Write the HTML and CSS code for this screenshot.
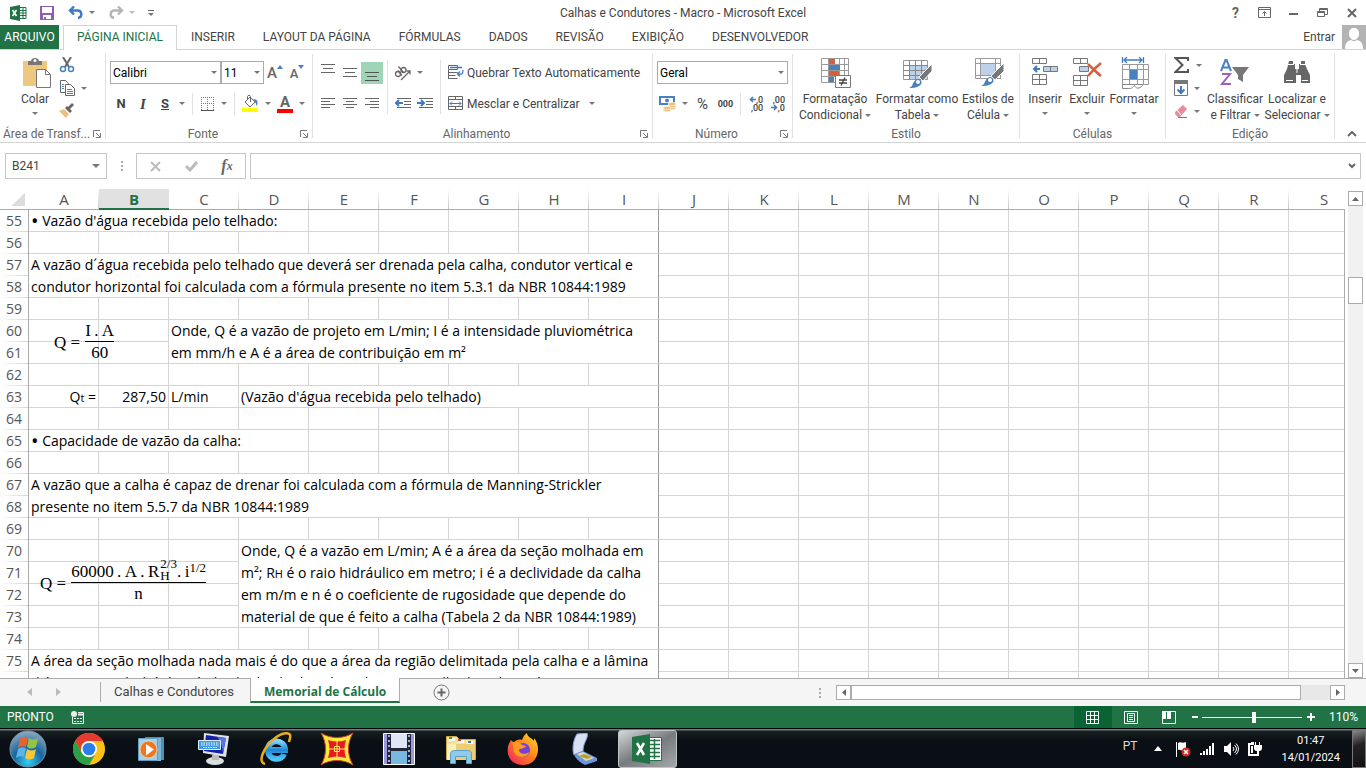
FILE: index.html
```html
<!DOCTYPE html>
<html lang="pt-BR">
<head>
    <meta charset="UTF-8">
    <meta name="viewport" content="width=device-width, initial-scale=1.0">
    <title>Calhas e Condutores - Macro - Microsoft Excel</title>
    <link rel="stylesheet" href="styles.css">
</head>
<body>
    <header class="titlebar">
        <div class="quick">
            <svg class="quick-logo" width="17" height="16" viewBox="0 0 17 16"><path fill="#217346" d="M0 2l10-2v16L0 14z"/><path fill="none" stroke="#217346" d="M10 2.5h6v11h-6M10 5.500h6M10 8h6M10 10.500h6M13 3v10"/><path stroke="#fff" stroke-width="1.600" d="M2.500 5l4 6M6.500 5l-4 6"/></svg>
            <button class="quick-save" aria-label="Salvar"><svg width="14" height="14" viewBox="0 0 14 14"><path fill="#8a5fb5" fill-rule="evenodd" d="M0 0h14v14H0zM2 1v6h10V1zM3 9v4h8V9z"/><path fill="#8a5fb5" d="M4 11h2v2H4z"/></svg></button>
            <button class="quick-undo" aria-label="Desfazer"><svg width="16" height="14" viewBox="0 0 16 14"><path fill="none" stroke="#3f7ac0" stroke-width="2.400" d="M2 4.500h7.500c5 0 5 7 .5 7.500M6 .500l-4 4 4 4"/></svg></button>
            <span class="arrow"></span>
            <button class="quick-redo" aria-label="Refazer"><svg width="16" height="14" viewBox="0 0 16 14"><path fill="none" stroke="#b5b5b5" stroke-width="2.400" d="M14 4.500H6.500c-5 0-5 7-.5 7.500M10 .500l4 4-4 4"/></svg></button>
            <span class="arrow arrow-pale"></span>
            <button class="quick-more" aria-label="Personalizar"><i></i><span class="arrow"></span></button>
        </div>
        <h1>Calhas e Condutores - Macro - Microsoft Excel</h1>
        <div class="window-buttons">
            <button aria-label="Ajuda"><b>?</b></button>
            <button aria-label="Opções da faixa"><svg width="13" height="11" viewBox="0 0 13 11"><path fill="none" stroke="#666" d="M.5.5h12v10H.5zM.5 2.500h12M6.500 9V4.500M4.500 6.500l2-2 2 2"/></svg></button>
            <button aria-label="Minimizar"><svg width="10" height="10"><path fill="#666" d="M0 5h9v2H0z"/></svg></button>
            <button aria-label="Restaurar"><svg width="11" height="10" viewBox="0 0 11 10"><path fill="none" stroke="#666" d="M2.500 3V.500h8v6H8M.5 3.500h7v5h-7zM2.500 1.500h8M.5 4.500h7"/></svg></button>
            <button aria-label="Fechar"><svg width="10" height="10" viewBox="0 0 10 10"><path stroke="#666" stroke-width="2" d="M1 1l8 8M9 1L1 9"/></svg></button>
        </div>
    </header>

    <nav class="tabs">
        <a href="#" class="file">ARQUIVO</a>
        <a href="#" class="active">PÁGINA INICIAL</a>
        <a href="#">INSERIR</a>
        <a href="#">LAYOUT DA PÁGINA</a>
        <a href="#">FÓRMULAS</a>
        <a href="#">DADOS</a>
        <a href="#">REVISÃO</a>
        <a href="#">EXIBIÇÃO</a>
        <a href="#">DESENVOLVEDOR</a>
        <div class="account">
            <a href="#">Entrar</a>
            <svg width="24" height="24" viewBox="0 0 24 24"><path fill="#b3b3b3" d="M0 0h24v24H0z"/><path fill="#fff" d="M12 3c3 0 5 2 5 5.500S15 15 12 15s-5-3-5-6.500S9 3 12 3zM3 24c0-6 2-8 6-9 2 1.500 4 1.500 6 0 4 1 6 3 6 9z"/></svg>
        </div>
    </nav>

    <section class="ribbon">
        <div class="group clipboard">
            <div class="body">
                <button class="big">
                    <svg width="32" height="32" viewBox="0 0 32 32"><path fill="#edc87e" d="M4 4h24v25H4z"/><path fill="#777" d="M9 4h3c0-4 8-4 8 0h3v4H9z"/><circle cx="16" cy="3.500" r="1.500" fill="#fff"/><path fill="#fff" stroke="#777" d="M17.500 12.500h9l5 5v13h-14z"/><path fill="none" stroke="#777" d="M26.500 12.500v5h5"/></svg>
                    <span>Colar</span><i class="arrow"></i>
                </button>
                <div class="stack">
                    <button aria-label="Recortar"><svg width="16" height="16" viewBox="0 0 16 16"><path stroke="#666" stroke-width="2" d="M4 0l6 10M12 0L6 10"/><g fill="none" stroke="#4a80bd" stroke-width="1.500"><circle cx="4" cy="12" r="2.500"/><circle cx="12" cy="12" r="2.500"/></g></svg></button>
                    <button aria-label="Copiar"><svg width="16" height="16" viewBox="0 0 16 16"><path fill="#fff" stroke="#666" d="M1.500.5h5l3 3v9h-8z"/><path fill="#fff" stroke="#666" d="M6.500 4.500h5l4 4v7h-9z"/><path stroke="#4a80bd" d="M3 4.500h2M3 6.500h2M3 8.500h2M8 9.500h5M8 11.500h6M8 13.500h6"/></svg><i class="arrow"></i></button>
                    <button aria-label="Pincel de formatação"><svg width="16" height="16" viewBox="0 0 16 16"><path fill="#edc07e" d="M0 8l5-2 5 5-3 4z"/><path fill="#666" d="M6 5l5 5 2-2-2-2 4-4-2-2-4 4-1-1z"/></svg></button>
                </div>
            </div>
            <div class="label">Área de Transf...</div><svg class="launch" width="8" height="8"><use href="#launcher"/></svg>
        </div>

        <div class="group font">
            <div class="body rows">
                <div class="row">
                    <label class="combo combo-font"><select aria-label="Fonte"><option>Calibri</option></select></label>
                    <label class="combo combo-size"><select aria-label="Tamanho"><option>11</option></select></label>
                    <button class="tool grow" aria-label="Aumentar">A<svg width="6" height="4"><path fill="#4a80bd" d="M3 0l3 4H0z"/></svg></button>
                    <button class="tool shrink" aria-label="Diminuir">A<svg width="6" height="4"><path fill="#4a80bd" d="M0 0h6L3 4z"/></svg></button>
                </div>
                <div class="row">
                    <button class="tool"><b>N</b></button>
                    <button class="tool italic"><b><i>I</i></b></button>
                    <button class="tool"><b><u>S</u></b></button>
                    <button class="drop" aria-label="Sublinhado"><i class="arrow"></i></button>
                    <span class="sep"></span>
                    <button class="tool" aria-label="Bordas"><svg width="13" height="14"><path stroke="#777" stroke-dasharray="1 1" d="M0 .5h13M.5 0v13M6.500 0v13M12.500 0v13M0 6.500h13"/><path stroke="#555" d="M0 13.500h13"/></svg></button>
                    <button class="drop" aria-label="Mais bordas"><i class="arrow"></i></button>
                    <span class="sep"></span>
                    <button class="tool fill-color" aria-label="Cor de preenchimento"><svg width="17" height="17" viewBox="0 0 17 17"><path fill="#fff" stroke="#666" d="M3 7l5-5 5 5-5 5z"/><path fill="none" stroke="#666" d="M5.500 4V1.500c0-1.500 3-1.500 3 0V7"/><path fill="#4a80bd" d="M11 4c5 0 5 3 4 7-1-1-1-4-4-7z"/><path fill="#ff0" d="M0 13h16v4H0z"/></svg></button>
                    <button class="drop" aria-label="Mais cores"><i class="arrow"></i></button>
                    <button class="tool font-color">A</button>
                    <button class="drop" aria-label="Mais cores da fonte"><i class="arrow"></i></button>
                </div>
            </div>
            <div class="label">Fonte</div><svg class="launch" width="8" height="8"><use href="#launcher"/></svg>
        </div>

        <div class="group align">
            <div class="body">
                <div class="rows">
                    <div class="row">
                        <button class="tool" aria-label="Em cima"><svg width="14" height="17"><path stroke="#666" d="M0 .5h14M2 4.500h10M0 8.500h14"/></svg></button>
                        <button class="tool" aria-label="No meio"><svg width="14" height="17"><path stroke="#666" d="M0 4.500h14M2 8.500h10M0 12.500h14"/></svg></button>
                        <button class="tool on" aria-label="Embaixo"><svg width="14" height="17"><path stroke="#555" d="M0 8.500h14M2 12.500h10M0 16.500h14"/></svg></button>
                    </div>
                    <div class="row">
                        <button class="tool" aria-label="Esquerda"><svg width="14" height="11"><path stroke="#666" d="M0 .5h14M0 3.500h9M0 6.500h14M0 9.500h9"/></svg></button>
                        <button class="tool" aria-label="Centro"><svg width="14" height="11"><path stroke="#666" d="M0 .5h14M3 3.500h8M0 6.500h14M3 9.500h8"/></svg></button>
                        <button class="tool" aria-label="Direita"><svg width="14" height="11"><path stroke="#666" d="M0 .5h14M5 3.500h9M0 6.500h14M5 9.500h9"/></svg></button>
                    </div>
                </div>
                <span class="sep tall"></span>
                <div class="rows">
                    <div class="row">
                        <button class="tool" aria-label="Orientação"><svg width="18" height="16" viewBox="0 0 18 16"><g fill="none" stroke="#666" stroke-width="1.300"><circle cx="4" cy="9" r="2.500"/><path d="M4 5.500l4 5"/><circle cx="9.500" cy="5" r="2.500"/><path d="M4.500 1.500l5 6"/><path d="M7 15l9-9M12.500 6H16v3.500"/></g></svg></button>
                        <button class="drop" aria-label="Mais orientações"><i class="arrow"></i></button>
                    </div>
                    <div class="row">
                        <button class="tool" aria-label="Diminuir recuo"><svg width="16" height="11"><path stroke="#666" d="M2 .5h14M9 3.500h7M9 6.500h7M2 9.500h14"/><path fill="none" stroke="#3f7ac0" stroke-width="2" d="M8 5H1M4 2L1 5l3 3"/></svg></button>
                        <button class="tool" aria-label="Aumentar recuo"><svg width="16" height="11"><path stroke="#666" d="M2 .5h14M9 3.500h7M9 6.500h7M2 9.500h14"/><path fill="none" stroke="#3f7ac0" stroke-width="2" d="M0 5h7M4 2l3 3-3 3"/></svg></button>
                    </div>
                </div>
                <span class="sep tall"></span>
                <div class="rows">
                    <div class="row"><button class="wide"><svg width="16" height="15"><path fill="none" stroke="#666" d="M.5.5h9v4h-9zM.5 7.500h9M.5 10.500h7M.5 13.500h9M.5 5v9"/><path fill="none" stroke="#3f7ac0" stroke-width="1.300" d="M2 2.500h12M15 5c0 5-2 4-5 4M12 6.500L9.500 9l2.500 2.500"/></svg>Quebrar Texto Automaticamente</button></div>
                    <div class="row"><button class="wide"><svg width="16" height="15"><path fill="none" stroke="#666" d="M.5.5h14v13H.5zM.5 3.500h14M.5 10.500h14M7.500.5v3M7.500 10.500v3"/><path fill="none" stroke="#3f7ac0" d="M2 7.500h11M4 5.500l-2 2 2 2M11 5.500l2 2-2 2"/></svg>Mesclar e Centralizar<i class="arrow"></i></button></div>
                </div>
            </div>
            <div class="label">Alinhamento</div><svg class="launch" width="8" height="8"><use href="#launcher"/></svg>
        </div>

        <div class="group number">
            <div class="body rows">
                <div class="row"><label class="combo combo-number"><select aria-label="Formato de número"><option>Geral</option></select></label></div>
                <div class="row">
                    <button class="tool" aria-label="Moeda"><svg width="18" height="16" viewBox="0 0 18 16"><path fill="none" stroke="#4a80bd" stroke-width="2" d="M1 1h14v7H1z"/><circle cx="8" cy="4.500" r="2" fill="#4a80bd"/><g fill="#edc07e" stroke="#fff" stroke-width=".6"><ellipse cx="13" cy="12" rx="4" ry="1.700"/><ellipse cx="13" cy="10" rx="4" ry="1.700"/><ellipse cx="13" cy="8" rx="4" ry="1.700"/><ellipse cx="8" cy="14" rx="4" ry="1.700"/><ellipse cx="8" cy="12" rx="4" ry="1.700"/></g></svg></button>
                    <button class="drop" aria-label="Mais moedas"><i class="arrow"></i></button>
                    <button class="tool percent">%</button>
                    <button class="tool thousands">000</button>
                    <span class="sep"></span>
                    <button class="tool decimals" aria-label="Aumentar casas"><span><svg width="7" height="7"><path fill="none" stroke="#3f7ac0" stroke-width="1.500" d="M7 3.500H1M4 1L1.500 3.500 4 6"/></svg>,0</span><span>,00</span></button>
                    <button class="tool decimals" aria-label="Diminuir casas"><span>,00</span><span><svg width="7" height="7"><path fill="none" stroke="#3f7ac0" stroke-width="1.500" d="M0 3.500h6M3 1l2.500 2.500L3 6"/></svg>,0</span></button>
                </div>
            </div>
            <div class="label">Número</div><svg class="launch" width="8" height="8"><use href="#launcher"/></svg>
        </div>

        <div class="group style">
            <div class="body">
                <button class="big">
                    <svg width="32" height="32" viewBox="0 0 32 32"><path fill="#fff" stroke="#999" d="M2.500 1.500h27v24h-27zM2.500 7.500h27M2.500 13.500h27M2.500 19.500h27M9.500 1.500v24M20.500 1.500v24M25.500 1.500v24"/><path fill="#d65f3e" d="M10 2h6v5h-6zM10 14h10v5H10z"/><path fill="#4a80bd" d="M10 8h11v5H10zM10 20h5v5h-5z"/><path fill="#fff" stroke="#777" d="M16.500 18.500h15v12h-15z"/><path stroke="#444" stroke-width="1.300" d="M20 23h8M20 26h8M26 20.500l-4 8"/></svg>
                    <span>Formatação<br>Condicional <i class="arrow"></i></span>
                </button>
                <button class="big">
                    <svg width="32" height="32" viewBox="0 0 32 32"><path fill="#fff" stroke="#999" d="M2.500 3.500h24v19h-24z"/><path fill="#bdd2ea" d="M9 9h17v13H9z"/><path stroke="#888" d="M2 8.500h25M2 13.500h25M2 18.500h25M8.500 3v20M14.500 3v20M20.500 3v20"/><path fill="#777" stroke="#fff" d="M31 7v7l-9 10-4-4z"/><path fill="#4a80bd" d="M8 31c5-1 3-8 9-9 4 0 5 5 1 7-3 2-7 2-10 2z"/><circle cx="17" cy="25" r="2" fill="#fff"/></svg>
                    <span>Formatar como<br>Tabela <i class="arrow"></i></span>
                </button>
                <button class="big style-cell">
                    <svg width="32" height="32" viewBox="0 0 32 32"><path fill="#fff" stroke="#999" d="M3.500 1.500h25v20h-25zM3 6.500h26M8.500 1v21M23.500 1v21M3 18.500h26"/><path fill="#bdd2ea" d="M9 7h14v11H9z"/><path fill="#777" stroke="#fff" d="M32 6v8l-9 9-4-4z"/><path fill="#4a80bd" d="M9 29c5-1 3-8 9-9 4 0 5 5 1 7-3 2-7 2-10 2z"/><circle cx="18" cy="23" r="2" fill="#fff"/></svg>
                    <span>Estilos de<br>Célula <i class="arrow"></i></span>
                </button>
            </div>
            <div class="label">Estilo</div>
        </div>

        <div class="group cells">
            <div class="body">
                <button class="big">
                    <svg width="32" height="32" viewBox="0 0 32 32"><path fill="#fff" stroke="#777" d="M3.500 1.500h14v5h-14zM10.500 1.500v5M3.500 17.500h14v10h-14zM10.500 17.500v10M3.500 22.500h14"/><path fill="#bdd2ea" stroke="#777" d="M14.500 9.500h14v5h-14zM21.500 9.500v5"/><path fill="none" stroke="#3f7ac0" stroke-width="2" d="M11 12H5M8 9l-3 3 3 3"/></svg>
                    <span>Inserir</span><i class="arrow"></i>
                </button>
                <button class="big">
                    <svg width="32" height="32" viewBox="0 0 32 32"><path fill="#fff" stroke="#777" d="M2.500 1.500h14v5h-14zM9.500 1.500v5M2.500 18.500h14v10h-14zM9.500 18.500v10M2.500 23.500h14"/><path fill="#bdd2ea" stroke="#777" d="M8.500 9.500h9v5h-9z"/><path fill="none" stroke="#d65f3e" stroke-width="2.500" d="M17 7c4 4 8 8 13 12M30 6c-5 4-9 8-13 13"/></svg>
                    <span>Excluir</span><i class="arrow"></i>
                </button>
                <button class="big">
                    <svg width="32" height="32" viewBox="0 0 32 32"><path fill="none" stroke="#3f7ac0" stroke-width="1.300" d="M4.500 0v6M25.500 0v6M6 3h18M9 0L6 3l3 3M21 0l3 3-3 3"/><path fill="#fff" stroke="#999" d="M4.500 7.500h26v20h-26zM4 12.500h27M4 22.500h27M11.500 7v20M19.500 7v20M25.500 7v20"/><path fill="#4a80bd" d="M12 13h7v9h-7z"/><path fill="#fff" stroke="#888" d="M4.500 27.500h20v1c-3 4-7 3-8 0-2 3-4 3-5 3h-7z"/></svg>
                    <span>Formatar</span><i class="arrow"></i>
                </button>
            </div>
            <div class="label">Células</div>
        </div>

        <div class="group edit">
            <div class="body">
                <div class="stack">
                    <button aria-label="Soma"><svg width="16" height="16" viewBox="0 0 16 16"><path fill="none" stroke="#555" stroke-width="2" d="M14 4V1H1.500l7 7-7 7H14v-3"/></svg><i class="arrow"></i></button>
                    <button aria-label="Preencher"><svg width="14" height="16" viewBox="0 0 14 16"><path fill="none" stroke="#777" d="M.5.5h13v15H.5z"/><path fill="#777" d="M0 0h14v4H0z"/><path fill="none" stroke="#3f7ac0" stroke-width="2" d="M7 6v7M3.500 9.500L7 13l3.500-3.500"/></svg><i class="arrow"></i></button>
                    <button aria-label="Limpar"><svg width="14" height="14" viewBox="0 0 14 14"><path fill="#ea8a9b" d="M1 8l8-7 4 4-7 8H4L1 10z"/><path stroke="#777" d="M4 13.500h9"/><path stroke="#fff" d="M3 6l4 5"/></svg><i class="arrow"></i></button>
                </div>
                <button class="big">
                    <svg width="32" height="32" viewBox="0 0 32 32"><path fill="none" stroke="#4a80bd" stroke-width="2" d="M2 14L6.500 3h1L12 14M4 10.500h6"/><path fill="none" stroke="#9b62b8" stroke-width="2" d="M3 17h8L3 27h9"/><path fill="#777" d="M13 10h17l-6 8v7l-5-3v-4z"/></svg>
                    <span>Classificar<br>e Filtrar <i class="arrow"></i></span>
                </button>
                <button class="big">
                    <svg width="32" height="32" viewBox="0 0 32 32"><path fill="#666" d="M8 4h4v3h2v5h4V7h2V4h4v3l2 5 3 6v8h-9v-8h-5v8H3v-8l3-6z"/><path stroke="#fff" d="M5 23.500h7M21 23.500h6M7 7.500h6M19 7.500h6M16 12v4"/></svg>
                    <span>Localizar e<br>Selecionar <i class="arrow"></i></span>
                </button>
            </div>
            <div class="label">Edição</div>
        </div>
        <button class="collapse" aria-label="Recolher"><svg width="10" height="6"><path fill="none" stroke="#666" stroke-width="2" d="M1 5l4-4 4 4"/></svg></button>
    </section>

    <svg class="symbols" width="0" height="0"><symbol id="launcher" viewBox="0 0 8 8"><path fill="none" stroke="#777" d="M.5 7V.500H7M7.500 3v4.500H3M3 3l4 4"/></symbol></svg>

    <section class="formula-bar">
        <div class="name-box"><input type="text" value="B241" aria-label="Caixa de nome"><i class="arrow"></i></div>
        <span class="dots"></span>
        <div class="formula-buttons">
            <button aria-label="Cancelar"><svg width="11" height="11"><path stroke="#bbb" stroke-width="2" d="M1 1l9 9M10 1l-9 9"/></svg></button>
            <button aria-label="Inserir"><svg width="13" height="11"><path fill="none" stroke="#bbb" stroke-width="3" d="M1 5l4 4 7-8"/></svg></button>
            <button class="fx">f<small>x</small></button>
        </div>
        <div class="formula-box"><input type="text" aria-label="Barra de fórmulas"><svg width="8" height="6"><path fill="none" stroke="#666" stroke-width="2" d="M1 1l3 3 3-3"/></svg></div>
    </section>

    <main class="sheet">
        <div class="grid"><table id="cells"></table></div>
        <div class="vscroll">
            <button aria-label="Para cima"><svg width="7" height="4"><path fill="#666" d="M3.500 0L7 4H0z"/></svg></button>
            <div class="track"><div class="thumb"></div></div>
            <button aria-label="Para baixo"><svg width="7" height="4"><path fill="#666" d="M0 0h7L3.500 4z"/></svg></button>
        </div>
    </main>

    <section class="sheet-tabs">
        <div class="sheet-nav">
            <svg width="5" height="8"><path fill="#bbb" d="M5 0v8L0 4z"/></svg>
            <svg width="5" height="8"><path fill="#bbb" d="M0 0l5 4-5 4z"/></svg>
        </div>
        <a href="#">Calhas e Condutores</a>
        <a href="#" class="active">Memorial de Cálculo</a>
        <button class="add" aria-label="Nova planilha"><svg width="17" height="17"><circle cx="8.500" cy="8.500" r="7.500" fill="none" stroke="#777"/><path stroke="#666" stroke-width="2" d="M4.500 8.500h8M8.500 4.500v8"/></svg></button>
        <div class="hscroll">
            <span class="dots"></span>
            <button aria-label="Para a esquerda"><svg width="4" height="7"><path fill="#666" d="M4 0v7L0 3.500z"/></svg></button>
            <div class="track"><div class="thumb"></div></div>
            <button aria-label="Para a direita"><svg width="4" height="7"><path fill="#666" d="M0 0l4 3.500L0 7z"/></svg></button>
        </div>
    </section>

    <footer class="status">
        <span>PRONTO</span>
        <svg width="13" height="13" viewBox="0 0 13 13"><path fill="none" stroke="#e8f1ec" d="M1.500 6v6.500h11v-11H7"/><circle cx="3" cy="3" r="3" fill="#e8f1ec"/><path stroke="#e8f1ec" stroke-dasharray="2 1" d="M3 7.500h8M3 10.500h8"/><path stroke="#e8f1ec" stroke-width="2" d="M7 3.500h6"/></svg>
        <div class="views">
            <button class="on" aria-label="Normal"><svg width="13" height="13"><path fill="none" stroke="#fff" d="M.5.5h12v12H.5zM.5 4.500h12M.5 8.500h12M4.500.5v12M8.500.5v12"/></svg></button>
            <button aria-label="Layout"><svg width="14" height="13"><path fill="none" stroke="#fff" d="M.5.5h13v12H.5zM3.500 2.500h7v8h-7zM5 4.500h4M5 6.500h4M5 8.500h4"/></svg></button>
            <button aria-label="Quebra de página"><svg width="14" height="13"><path fill="none" stroke="#fff" d="M.5.5h13v12H.5z"/><path fill="#fff" d="M0 0h4v8H0zM5 0h4v8H5z"/></svg></button>
        </div>
        <button class="zoom" aria-label="Menos zoom"><svg width="6" height="10"><path fill="#fff" d="M0 4h6v2H0z"/></svg></button>
        <input type="range" min="0" max="100" value="52" aria-label="Zoom">
        <button class="zoom" aria-label="Mais zoom"><svg width="8" height="8"><path fill="#fff" d="M0 3h3V0h2v3h3v2H5v3H3V5H0z"/></svg></button>
        <span class="percent-zoom">110%</span>
    </footer>

    <footer class="taskbar">
        <button class="start" aria-label="Iniciar">
            <svg width="40" height="38" viewBox="0 0 40 38"><defs><radialGradient id="orb" cx=".5" cy=".85" r=".9"><stop offset="0" stop-color="#35d0f5"/><stop offset=".45" stop-color="#1764a0"/><stop offset="1" stop-color="#9fb4c0"/></radialGradient></defs><circle cx="20" cy="19" r="18" fill="url(#orb)" stroke="#6e98ac"/><path fill="#e8622b" d="M12 9c3-2 5-2 8-1l-2 9c-3-1-5-1-8 1z"/><path fill="#8fc745" d="M21 8c3 2 6 2 9 0l-2 9c-3 2-6 2-9 0z"/><path fill="#5bb3ea" d="M10 19c3-2 5-2 8-1l-2 9c-3-1-5-1-8 1z"/><path fill="#fbc738" d="M19 19c3 2 6 2 9 0l-2 9c-3 2-6 2-9 0z"/></svg>
        </button>
        <button aria-label="Chrome"><svg width="32" height="32" viewBox="0 0 32 32"><circle cx="16" cy="16" r="16" fill="#fbc116"/><path fill="#e33b2e" d="M2.100 8A16 16 0 0 1 29.900 8H16a8 8 0 0 0-7 12z"/><path fill="#2c9f4b" d="M2.100 8L9 20a8 8 0 0 0 14 0l-7 12A16 16 0 0 1 2.100 8z"/><circle cx="16" cy="16" r="8" fill="#fff"/><circle cx="16" cy="16" r="6.300" fill="#2b7de9"/></svg></button>
        <button aria-label="Media Player"><svg width="32" height="32" viewBox="0 0 32 32"><path fill="#4e8fb8" d="M10 4h19v23H10z"/><path fill="#79b6d8" d="M8 5h18v23H8z"/><path fill="#a2d2e8" stroke="#609dbe" d="M3.500 5.500h19v22h-19z"/><circle cx="13.500" cy="16.500" r="8.500" fill="#f0761e" stroke="#fbcaa0"/><path fill="#fff" d="M11 11l8 5.500-8 6z"/></svg></button>
        <button aria-label="Teclado"><svg width="32" height="32" viewBox="0 0 32 32"><path fill="#dfe3e6" d="M7 0l25 3-3 21-23-4z"/><path fill="#1420a8" d="M9 2l20 3-3 16-19-3z"/><path fill="#5a73e5" d="M20 4l9 1-3 15c-1-7-2-12-6-16z"/><ellipse cx="18" cy="28" rx="9" ry="4" fill="#dadfe2"/><path fill="#bbb" d="M15 22h7v5h-7z"/><path fill="#3f9bdf" stroke="#d8efff" d="M1.500 7.500h22v9h-22z"/><path stroke="#fff" stroke-dasharray="1.500 1" d="M4 10h18M4 12h18M6 14.500h14"/></svg></button>
        <button aria-label="Internet Explorer"><svg width="34" height="34" viewBox="0 0 34 34"><defs><linearGradient id="ie" x2="0" y2="1"><stop offset="0" stop-color="#7bd4fb"/><stop offset=".5" stop-color="#1f85d6"/><stop offset="1" stop-color="#50c2f5"/></linearGradient></defs><path fill="none" stroke="url(#ie)" stroke-width="6" d="M9 18h18c0-11-17-12-17 0 0 11 14 11 16 4"/><path fill="none" stroke="#e9ac20" stroke-width="2.500" d="M7 32c-8-2-1-17 9-25C24 0 34-1 32 6l-1 4"/></svg></button>
        <button aria-label="Aplicativo"><svg width="34" height="34" viewBox="0 0 34 34"><path fill="#ffe53a" stroke="#c43a32" d="M1 1c10 6 22 6 32 0-6 10-6 22 0 32-10-6-22-6-32 0C7 23 7 11 1 1z"/><path fill="#e61b22" d="M8 8c6 2 12 2 18 0-2 6-2 12 0 18-6-2-12-2-18 0 2-6 2-12 0-18z"/><path fill="none" stroke="#ffe95d" d="M17 7v20M7 17h20"/><path fill="none" stroke="#ffe95d" d="M14.500 14.500h5v5h-5z"/></svg></button>
        <button aria-label="Vídeo"><svg width="32" height="32" viewBox="0 0 32 32"><path fill="#9b99dc" stroke="#fff" d="M.5.500h31v31H.5z"/><path fill="#dfe7f6" d="M8 1h16v30H8z"/><path fill="#222936" d="M4 1h4v30H4zM24 1h4v30h-4zM8 15h16v3H8z"/><path fill="#79b8e0" d="M8 18h16v13H8z"/><path stroke="#aaa9e8" stroke-width="2" stroke-dasharray="2 3" d="M6 2v28M26 2v28"/></svg></button>
        <button aria-label="Explorador"><svg width="32" height="32" viewBox="0 0 32 32"><path fill="#f6e196" stroke="#d0a94e" d="M1.500 3.500h10l3 3h16v20h-29z"/><path fill="#fff" d="M4 5h6v3H4zM13 7h6v3h-6zM22 8h6v3h-6z"/><path fill="#36a83b" d="M4 4h3v2H4z"/><path fill="#d8452a" d="M13 6h3v2h-3z"/><path fill="#2878c8" d="M23 8h3v2h-3z"/><path fill="#eecd72" d="M2 11h28v16H2z"/><path fill="#fbefb9" d="M2 11h9v16H2z"/><path fill="#8fcbe9" stroke="#5a9fc6" d="M5.500 30.500V20.500c0-2 2-3 4-3h13c3 0 4 1 4 3v10h-5v-7h-11v7z"/></svg></button>
        <button aria-label="Firefox"><svg width="32" height="32" viewBox="0 0 32 32"><defs><linearGradient id="fox" x1="1" y1="0" x2="0" y2="1"><stop offset="0" stop-color="#ffe12a"/><stop offset=".5" stop-color="#ff7a1d"/><stop offset="1" stop-color="#ee1c6b"/></linearGradient></defs><path fill="url(#fox)" d="M4 7c1 1 2 2 3 2 2-2 5-3 8-2 1-3 2-5 5-7 0 4 5 5 7 8V5c8 9 4 27-11 27C1 32-3 17 4 7z"/><circle cx="16" cy="17" r="7" fill="#7542d6"/><path fill="#ff9a22" d="M5 10c4-2 8-1 10 2l4 1c-1 3-7 2-7 4 0 4 7 5 10 2-1 6-12 7-15 0-1-3 0-5-2-9z"/></svg></button>
        <button aria-label="Scanner"><svg width="32" height="32" viewBox="0 0 32 32"><path fill="#d8e0f4" stroke="#8da4d8" d="M8 1l10-1c2 5-4 9-4 18l-9 4C3 17 4 7 8 1z"/><path fill="#6f93dd" d="M5 21l9-3 14 7v3l-12 4C10 29 6 25 5 21z"/><path fill="#d5e0b8" d="M8 21l6-2 11 6-8 3z"/><path fill="#b7a030" d="M15 21l8 3-5 2-8-3z"/></svg></button>
        <button class="open" aria-label="Excel"><svg width="32" height="30" viewBox="0 0 32 30"><path fill="#fff" stroke="#217346" d="M16 3.500h13.500v23H16z"/><path fill="#217346" d="M0 3l18-3v30L0 27z"/><path stroke="#217346" stroke-width="1.500" d="M18 6.500h10M18 10.500h10M18 14.500h10M18 18.500h10M18 22.500h10M22.500 5v20"/><path stroke="#fff" stroke-width="2.500" d="M5 9l7 12M12 9L5 21"/></svg></button>
        <div class="tray">
            <span class="lang">PT</span>
            <svg class="more" width="8" height="5"><path fill="#fff" d="M4 0l4 5H0z"/></svg>
            <svg width="16" height="16" viewBox="0 0 16 16"><path fill="#fff" d="M1 1h1v15H1zM3 2c3-2 4 1 8-1v8c-4 2-5-1-8 0z"/><circle cx="11" cy="11" r="4.500" fill="#d3281f"/><path stroke="#fff" stroke-width="1.500" d="M9 9l4 4M13 9l-4 4"/></svg>
            <svg width="15" height="12"><path fill="#fff" d="M0 10h2v2H0zM3 8h2v4H3zM6 6h2v6H6zM9 3h2v9H9zM12 0h2v12h-2z"/></svg>
            <svg width="15" height="14" viewBox="0 0 15 14"><path fill="#fff" d="M0 4h3l4-4v14l-4-4H0z"/><path fill="none" stroke="#fff" d="M9 5q2 2 0 4M10.500 3q4 4 0 8M12 1.500q5 5.500 0 11"/></svg>
            <svg width="14" height="14" viewBox="0 0 14 14"><path fill="none" stroke="#fff" stroke-width="2" d="M6 2H1v11h9v-2"/><path fill="#fff" d="M3 0h3v2H3zM3 4h2v7H3zM7 0h1v3h3V0h1v3h2v3c0 2-1 3-3 3v3H9V9C7 9 6 8 6 6V3h1z"/></svg>
            <time>01:47<br>14/01/2024</time>
        </div>
        <button class="show-desktop" aria-label="Mostrar área de trabalho"></button>
    </footer>

    <script src="script.js"></script>
</body>
</html>
```
FILE: script.js
```javascript
const columns = 'ABCDEFGHIJKLMNOPQRS'.split('');
const textColumns = 9;

const bullet = '<span class="bullet">•</span>';
const formulaQ = '<span class="formula formula-one">Q&nbsp;=<span class="fraction"><span>I&thinsp;.&thinsp;A</span><span>60</span></span></span>';
const formulaManning = '<span class="formula formula-two">Q&nbsp;=<span class="fraction"><span>60000&thinsp;.&thinsp;A&thinsp;.&thinsp;R<span class="scripts"><i>2/3</i><i>H</i></span>.&thinsp;i<sup>1/2</sup></span><span>n</span></span></span>';

// row number -> cells as [colspan, rowspan, html, class]
const content = {
    55: [[4, 1, bullet + " Vazão d'água recebida pelo telhado:"]],
    57: [[9, 2, 'A vazão d´água recebida pelo telhado que deverá ser drenada pela calha, condutor vertical e<br>condutor horizontal foi calculada com a fórmula presente no item 5.3.1 da NBR 10844:1989']],
    58: [],
    60: [[1, 1, formulaQ], [1, 1, ''], [7, 2, 'Onde, Q é a vazão de projeto em L/min; I é a intensidade pluviométrica<br>em mm/h e A é a área de contribuição em m²']],
    61: [[1, 1, ''], [1, 1, '']],
    63: [[1, 1, 'Q<small>t</small> =', 'right'], [1, 1, '287,50', 'right'], [1, 1, 'L/min'], [6, 1, "(Vazão d'água recebida pelo telhado)"]],
    65: [[4, 1, bullet + ' Capacidade de vazão da calha:']],
    67: [[9, 2, 'A vazão que a calha é capaz de drenar foi calculada com a fórmula de Manning-Strickler<br>presente no item 5.5.7 da NBR 10844:1989']],
    68: [],
    70: [[1, 1, ''], [1, 1, ''], [1, 1, ''], [6, 4, 'Onde, Q é a vazão em L/min; A é a área da seção molhada em<br>m²; R<small>H</small> é o raio hidráulico em metro; i é a declividade da calha<br>em m/m e n é o coeficiente de rugosidade que depende do<br>material de que é feito a calha (Tabela 2 da NBR 10844:1989)']],
    71: [[1, 1, formulaManning], [1, 1, ''], [1, 1, '']],
    72: [[1, 1, ''], [1, 1, ''], [1, 1, '']],
    73: [[1, 1, ''], [1, 1, ''], [1, 1, '']],
    75: [[9, 2, "A área da seção molhada nada mais é do que a área da região delimitada pela calha e a lâmina<br>d'água. O raio hidráulico é obtido dividindo a área da seção molhada pelo perímetro"]],
    76: []
};

// rows partly covered by a merge that started above them
const covered = [58, 61, 68, 71, 72, 73, 76];

let html = '<thead><tr><th class="corner"></th>';
columns.forEach(c => {
    html += `<th class="${c === 'B' ? 'selected' : ''}">${c}</th>`;
});
html += '</tr></thead><tbody>';

for (let row = 55; row <= 76; row++) {
    html += `<tr><th>${row}</th>`;
    const isCovered = covered.includes(row);
    const cells = (content[row] || []).slice();
    let used = cells.reduce((sum, c) => sum + c[0], 0);
    while (used < textColumns && !isCovered) {
        cells.push([1, 1, '']);
        used++;
    }
    cells.forEach((c, i) => {
        const last = !isCovered && i === cells.length - 1;
        const inner = c[1] > 1 ? `<div class="merged">${c[2]}</div>` : c[2];
        html += `<td colspan="${c[0]}" rowspan="${c[1]}" class="${c[3] || ''}${last ? ' page-edge' : ''}">${inner}</td>`;
    });
    for (let i = textColumns; i < columns.length; i++) {
        html += '<td></td>';
    }
    html += '</tr>';
}

document.getElementById('cells').innerHTML = html + '</tbody>';
```
FILE: styles.css
```css
* {
    box-sizing: border-box;
}

body {
    margin: 0;
    height: 100vh;
    display: flex;
    flex-direction: column;
    overflow: hidden;
    font-family: Roboto, "Open Sans", sans-serif;
    font-size: 12px;
    line-height: 16px;
    color: #444;
    background: #fff;
}

button {
    display: flex;
    align-items: center;
    justify-content: center;
    padding: 0;
    border: 0;
    background: none;
    font: inherit;
    color: inherit;
}

a {
    color: inherit;
    text-decoration: none;
}

svg {
    display: block;
    flex: none;
}

.symbols {
    position: absolute;
}

.arrow {
    display: inline-block;
    flex: none;
    border: 3px solid transparent;
    border-top-color: #777;
    border-bottom: 0;
}

.arrow-pale {
    border-top-color: #bbb;
}

/* title bar */
.titlebar {
    display: grid;
    grid-template-columns: 1fr auto 1fr;
    align-items: center;
    height: 25px;
    flex: none;
}

.titlebar h1 {
    margin: 0;
    font-size: 12px;
    font-weight: 400;
}

.quick {
    display: flex;
    align-items: center;
    padding-left: 10px;
    height: 22px;
}

.quick-save {
    margin-left: 13px;
}

.quick-undo {
    margin: 0 5px 0 14px;
}

.quick-redo {
    margin: 0 5px 0 13px;
}

.quick-more {
    flex-direction: column;
    gap: 2px;
    margin-left: 13px;
}

.quick-more i {
    width: 6px;
    height: 1px;
    background: #666;
}

.window-buttons {
    display: flex;
    justify-content: flex-end;
    height: 22px;
}

.window-buttons button {
    width: 29px;
}

.window-buttons b {
    font-size: 14px;
    color: #666;
}

/* ribbon tabs */
.tabs {
    display: flex;
    height: 25px;
    flex: none;
    border-bottom: 1px solid #d4d4d4;
    line-height: 25px;
}

.tabs > a {
    padding: 0 14px;
    white-space: nowrap;
}

.tabs .file {
    width: 59px;
    margin: 0 4px 0 0;
    padding: 0;
    text-align: center;
    background: #217346;
    color: #fff;
}

.tabs .active {
    height: 25px;
    padding: 0 13px;
    border: 1px solid #d4d4d4;
    border-width: 1px 1px 0;
    line-height: 23px;
    background: #fff;
    color: #217346;
}

.account {
    display: flex;
    gap: 7px;
    margin-left: auto;
}

/* ribbon */
.ribbon {
    display: flex;
    height: 93px;
    flex: none;
    border-bottom: 1px solid #d4d4d4;
}

.group {
    position: relative;
    display: flex;
    flex-direction: column;
    justify-content: space-between;
    flex: none;
    margin: 4px 0;
    border-right: 1px solid #e1e1e1;
}

.clipboard { width: 106px; }
.font { width: 207px; }
.align { width: 340px; }
.number { width: 140px; }
.style { width: 227px; }
.cells { width: 146px; }
.edit { width: 169px; }

.body {
    display: flex;
    padding: 3px 4px 0;
}

.rows {
    display: flex;
    flex-direction: column;
    gap: 8px;
    padding-top: 4px;
}

.body.rows {
    padding-top: 7px;
}

.row {
    display: flex;
    align-items: center;
    height: 23px;
}

.label {
    margin-bottom: -3px;
    text-align: center;
    line-height: 14px;
    color: #666;
    padding-right: 12px;
}

.style .label,
.cells .label,
.edit .label {
    padding: 0;
}

.clipboard .label {
    padding: 0 0 0 3px;
    text-align: left;
}

.launch {
    position: absolute;
    right: 4px;
    bottom: 0;
}

.big {
    flex-direction: column;
    justify-content: flex-start;
    min-width: 42px;
    white-space: nowrap;
}

.big > svg {
    margin-bottom: 2px;
}

.big > .arrow {
    margin-top: 5px;
}

.big .arrow {
    vertical-align: middle;
}

.clipboard .body {
    padding: 3px 0 0 4px;
}

.clipboard .big {
    width: 62px;
}

.style .big {
    width: 82px;
}

.style .style-cell {
    width: 60px;
}

.style .body {
    padding: 3px 1px 0;
}

.cells .big:last-child {
    width: 52px;
}

.edit .big {
    width: 62px;
}

.edit .body {
    padding-left: 8px;
}

.stack {
    display: flex;
    flex-direction: column;
    gap: 7px;
    width: 30px;
}

.clipboard .stack {
    margin-left: -7px;
}

.stack button {
    height: 16px;
    gap: 6px;
    justify-content: flex-start;
}

.combo {
    position: relative;
    height: 23px;
}

.combo::after {
    content: "";
    position: absolute;
    right: 4px;
    top: 10px;
    border: 3px solid transparent;
    border-top-color: #777;
    border-bottom: 0;
}

.combo select {
    width: 100%;
    height: 23px;
    padding: 0 2px;
    border: 1px solid #ababab;
    border-radius: 0;
    appearance: none;
    background: #fff;
    font: inherit;
    color: #000;
}

.combo-font { width: 111px; }
.combo-size { width: 43px; }
.combo-number { width: 131px; }

.tool {
    width: 22px;
    height: 22px;
    font-size: 13px;
}

.italic {
    font-family: "Liberation Serif", serif;
    font-size: 15px;
}

.tool.on {
    background: #9fd5b7;
}

.drop {
    width: 12px;
    height: 22px;
}

.sep {
    width: 1px;
    height: 22px;
    margin: 0 3px 0 4px;
    background: #e1e1e1;
}

.sep.tall {
    height: 54px;
    margin: 3px 4px 0;
}

.grow,
.shrink {
    align-items: flex-start;
    font-size: 15px;
    font-weight: 500;
    color: #666;
    line-height: 23px;
}

.shrink {
    font-size: 13px;
}

.grow svg,
.shrink svg {
    margin-top: 3px;
}

.fill-color {
    width: 24px;
}

.font-color {
    height: 18px;
    width: 16px;
    margin: 0 3px;
    border-bottom: 4px solid #f00;
    font-weight: 700;
    font-size: 15px;
    line-height: 14px;
    color: #666;
}

.wide {
    gap: 3px;
    padding-left: 3px;
    white-space: nowrap;
}

.wide .arrow {
    margin-left: 6px;
}

.percent {
    width: 24px;
    font-size: 15px;
}

.thousands {
    font-size: 9px;
    font-weight: 700;
}

.decimals {
    flex-direction: column;
    align-items: flex-end;
    padding-right: 3px;
    font-size: 9px;
    line-height: 8px;
    font-weight: 500;
}

.decimals span {
    display: flex;
}

.collapse {
    margin: auto 0 5px 12px;
}

/* formula bar */
.formula-bar {
    display: flex;
    gap: 4px;
    flex: none;
    padding: 10px 5px;
    height: 46px;
}

.name-box,
.formula-buttons,
.formula-box {
    display: flex;
    align-items: center;
    border: 1px solid #c6c6c6;
}

.name-box {
    width: 102px;
    padding: 0 6px;
}

.formula-bar input {
    flex: 1;
    min-width: 0;
    border: 0;
    padding: 0;
    font: inherit;
    color: #444;
    background: none;
    outline: 0;
}

.name-box .arrow {
    border-width: 4px 4px 0;
}

.dots {
    flex: none;
    width: 2px;
    height: 10px;
    background: repeating-linear-gradient(#aaa 0 2px, transparent 2px 4px);
    align-self: center;
}

.formula-bar .dots {
    margin: 0 9px 0 10px;
}

.formula-buttons {
    width: 110px;
}

.formula-buttons button {
    flex: 1;
}

.fx {
    font-family: "Liberation Serif", serif;
    font-size: 16px;
    font-style: italic;
    font-weight: 700;
    color: #666;
}

.fx small {
    font-size: 12px;
}

.formula-box {
    flex: 1;
    padding: 0 4px;
}

/* grid */
.sheet {
    display: flex;
    flex: 1;
    min-height: 0;
}

.grid {
    position: relative;
    flex: 1;
    overflow: hidden;
}

.grid::after {
    content: "";
    position: absolute;
    top: 20px;
    right: 0;
    bottom: 0;
    width: 1px;
    background: #ababab;
}

table {
    width: 1359px;
    table-layout: fixed;
    border-collapse: separate;
    border-spacing: 0;
    font-family: "Open Sans", "Noto Sans", sans-serif;
    font-size: 14px;
    color: #000;
}

th {
    height: 22px;
    padding: 0;
    border-right: 1px solid #ababab;
    font-weight: 400;
    line-height: 22px;
    color: #555;
    background: linear-gradient(90deg, #fff, #d4d4d4) bottom / 100% 1px no-repeat;
}

thead th {
    width: 70px;
    height: 21px;
    border-right: 0;
    border-bottom: 1px solid #ababab;
    font-size: 15px;
    line-height: 20px;
    background: linear-gradient(#fff, #c6c6c6) right / 1px 100% no-repeat;
}

.corner {
    width: 29px;
    background: linear-gradient(135deg, transparent 50%, #ddd 50%) 12px 4px / 13px 13px no-repeat;
}

th.selected {
    padding-top: 1px;
    border-bottom: 2px solid #217346;
    font-weight: 700;
    line-height: 18px;
    color: #217346;
    background: #e1e1e1;
}

td {
    position: relative;
    height: 22px;
    padding: 0 2px;
    border: 1px solid #d4d4d4;
    border-width: 0 1px 1px 0;
    vertical-align: top;
    white-space: nowrap;
    line-height: 21px;
}

.merged {
    margin-bottom: -1px;
    line-height: 22px;
}

.bullet {
    font-size: 20px;
    line-height: 0;
    vertical-align: -2px;
}

td.right {
    text-align: right;
}

td.page-edge {
    border-right-color: #999;
}

td small {
    font-size: 11px;
    line-height: 1;
}

.formula {
    position: absolute;
    z-index: 1;
    display: flex;
    align-items: center;
    gap: 5px;
    font-family: "Liberation Serif", serif;
    font-size: 17px;
}

.formula-one {
    left: 25px;
    top: 0;
}

.formula-two {
    left: 11px;
    top: -1px;
}

.fraction {
    display: flex;
    flex-direction: column;
    text-align: center;
}

.fraction > span {
    display: flex;
    justify-content: center;
    height: 22px;
    line-height: 22px;
}

.fraction > span:first-child {
    border-bottom: 1px solid #000;
}

.scripts {
    display: flex;
    flex-direction: column;
    margin-top: -3px;
    padding-left: 1px;
    font-size: 13px;
    line-height: 12px;
    text-align: left;
}

.scripts i {
    font-style: normal;
}

.formula sup {
    font-size: 13px;
    line-height: 14px;
}

/* scroll bars */
.vscroll {
    display: flex;
    flex-direction: column;
    width: 21px;
    padding: 2px 3px 0;
}

.vscroll button,
.hscroll button {
    flex: none;
    width: 15px;
    height: 15px;
    border: 1px solid #ababab;
    background: #fff;
}

.vscroll .track {
    flex: 1;
    padding-top: 71px;
    background: #f1f1f1;
}

.vscroll .thumb {
    height: 27px;
    border: 1px solid #ababab;
    background: #fff;
}

.sheet-tabs {
    display: flex;
    height: 28px;
    flex: none;
    border-top: 1px solid #ababab;
    background: #f5f5f5;
    font-size: 13px;
    line-height: 26px;
}

.sheet-nav {
    display: flex;
    align-items: center;
    gap: 24px;
    width: 101px;
    height: 20px;
    margin-top: 3px;
    padding-left: 27px;
    border-right: 1px solid #ababab;
}

.sheet-tabs a {
    padding: 0 16px 0 13px;
}

.sheet-tabs .active {
    height: 25px;
    margin-top: -1px;
    padding: 0 13px;
    border: 1px solid #ababab;
    border-width: 0 1px;
    border-bottom: 2px solid #217346;
    background: #fff;
    font-family: "Open Sans", "Noto Sans", sans-serif;
    font-size: 12px;
    font-weight: 700;
    line-height: 27px;
    color: #217346;
}

.add {
    margin-left: 33px;
}

.hscroll {
    display: flex;
    align-items: center;
    width: 547px;
    margin-left: auto;
    padding-right: 21px;
}

.hscroll .dots {
    margin-right: 15px;
}

.hscroll .track {
    flex: 1;
    height: 15px;
    background: #e8e8e8;
}

.hscroll .thumb {
    width: 94%;
    height: 15px;
    border: 1px solid #ababab;
    background: #fff;
}

/* status bar */
.status {
    display: flex;
    align-items: center;
    height: 22px;
    flex: none;
    padding: 0 8px 0 7px;
    background: #217346;
    color: #fff;
}

.status > svg {
    margin-left: 17px;
}

.views {
    display: flex;
    margin-left: auto;
}

.views button {
    width: 38px;
    height: 22px;
}

.views .on {
    background: #0a6332;
}

.zoom {
    margin: 0 4px;
}

.status input {
    width: 100px;
    height: 12px;
    margin: 0 1px 0 0;
    appearance: none;
    background: linear-gradient(#fff, #fff) center / 100% 1px no-repeat;
}

.status input::-webkit-slider-thumb {
    appearance: none;
    width: 4px;
    height: 11px;
    background: #fff;
}

.percent-zoom {
    margin-left: 10px;
}

/* taskbar */
.taskbar {
    display: flex;
    align-items: center;
    height: 40px;
    flex: none;
    border-top: 1px solid #05080a;
    background: linear-gradient(#6f7b80 0 1px, #16201f 2px, #0a0e15 12px);
    color: #fff;
}

.taskbar button {
    width: 62px;
    height: 38px;
}

.taskbar .start {
    width: 55px;
    margin-right: 3px;
}

.taskbar .open {
    width: 59px;
    border: 1px solid #c0c5c8;
    border-radius: 3px;
    margin-left: 2px;
    background: linear-gradient(150deg, #d5d8d9, #777b7e 50%, #a5a8aa);
}

.tray {
    display: flex;
    align-items: center;
    gap: 9px;
    margin-left: auto;
}

.tray .more {
    margin-right: 4px;
}

.lang {
    margin: 0 8px 6px 0;
    color: #ddd;
}

.tray time {
    margin-left: 10px;
    text-align: center;
    font-size: 11px;
    line-height: 17px;
}

.taskbar .show-desktop {
    width: 14px;
    margin-left: 12px;
    border: 1px solid #777;
    background: linear-gradient(160deg, #888, #222 40%, #111);
}
```
